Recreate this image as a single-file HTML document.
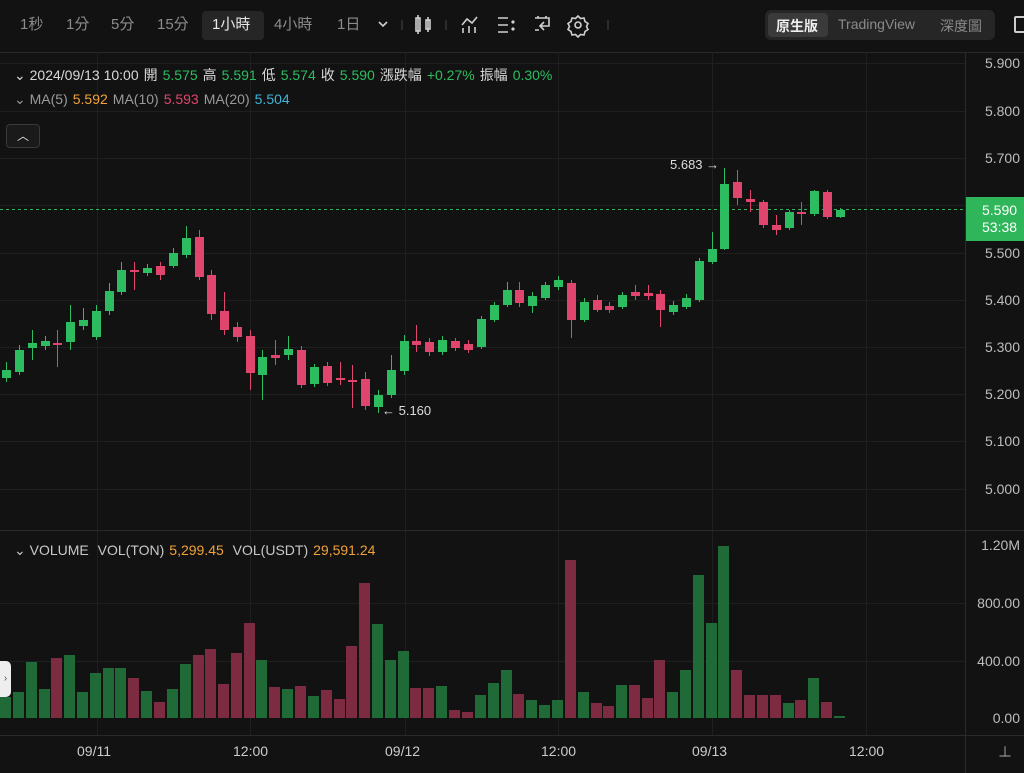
<!DOCTYPE html>
<html><head><meta charset="utf-8">
<style>
*{margin:0;padding:0;box-sizing:border-box}
body{width:1024px;height:773px;background:#121212;overflow:hidden;font-family:"Liberation Sans","Noto Sans CJK TC",sans-serif;color:#8a8a8a;position:relative}
.abs{position:absolute;white-space:nowrap}
.tb{top:13px;font-size:15px;color:#8c8c8c}
.g{color:#2dbd60}.o{color:#f0a23b}.p{color:#e0456e}.b{color:#3fb5d8}.w{color:#d8d8d8}
.ax{font-size:14px;color:#bdbdbd;right:4px}
.lg span{margin-right:5px}
</style></head><body>
<div class="abs tb" style="left:20px">1秒</div>
<div class="abs tb" style="left:66px">1分</div>
<div class="abs tb" style="left:111px">5分</div>
<div class="abs tb" style="left:157px">15分</div>
<div class="abs" style="left:202px;top:11px;width:62px;height:29px;background:#262626;border-radius:4px"></div>
<div class="abs tb" style="left:212px;color:#e8e8e8">1小時</div>
<div class="abs tb" style="left:274px">4小時</div>
<div class="abs tb" style="left:337px">1日</div>
<svg class="abs" style="left:0;top:0" width="620" height="52" fill="none" stroke="#d0d0d0" stroke-width="1.6">
<path d="M379 22l4 4 4-4" />
<line x1="402" y1="20" x2="402" y2="30" stroke="#333"/>
<rect x="416" y="18" width="4" height="13"/><line x1="418" y1="15" x2="418" y2="34"/><rect x="426" y="20" width="4" height="9"/><line x1="428" y1="17" x2="428" y2="32"/>
<line x1="446" y1="20" x2="446" y2="30" stroke="#333"/>
<path d="M462 25l5-6 5 4 5-6"/><line x1="463" y1="28" x2="463" y2="33"/><line x1="469" y1="26" x2="469" y2="33"/><line x1="475" y1="27" x2="475" y2="33"/>
<path d="M498 18h10M498 25h10M498 32h10"/><circle cx="513" cy="22" r=".8"/><circle cx="513" cy="29" r=".8"/>
<path d="M535 18h14v8h-8M544 22l-4 4 4 4M538 18v-2M546 18v-2M535 30h4"/>
<circle cx="578" cy="25" r="3"/><path d="M578 16l2.5 2.5 3.5-.5 1 3.5 3 2-1.5 3 1.5 3-3 2-1 3.5-3.5-.5-2.5 2.5-2.5-2.5-3.5.5-1-3.5-3-2 1.5-3-1.5-3 3-2 1-3.5 3.5.5z"/>
<line x1="608" y1="20" x2="608" y2="30" stroke="#333"/>
</svg>
<div class="abs" style="left:765px;top:10px;width:230px;height:30px;background:#262626;border-radius:6px"></div>
<div class="abs" style="left:768px;top:13px;width:60px;height:24px;background:#3a3a3a;border-radius:4px"></div>
<div class="abs" style="left:776px;top:16px;font-size:14px;color:#eee;font-weight:bold">原生版</div>
<div class="abs" style="left:838px;top:16px;font-size:14px;color:#8a8a8a">TradingView</div>
<div class="abs" style="left:940px;top:16px;font-size:14px;color:#8a8a8a">深度圖</div>
<div class="abs" style="left:1014px;top:16px;width:12px;height:17px;border:2px solid #ccc;border-radius:2px"></div>

<svg class="abs" style="left:0;top:0" width="1024" height="773" id="s"></svg>

<div class="abs lg" style="left:14px;top:65px;font-size:14px" ><span class="w">⌄ 2024/09/13 10:00</span><span class="w">開</span><span class="g">5.575</span><span class="w">高</span><span class="g">5.591</span><span class="w">低</span><span class="g">5.574</span><span class="w">收</span><span class="g">5.590</span><span class="w">漲跌幅</span><span class="g">+0.27%</span><span class="w">振幅</span><span class="g">0.30%</span></div>
<div class="abs lg" style="left:14px;top:91px;font-size:14px;color:#9a9a9a"><span>⌄ MA(5)</span><span class="o">5.592</span><span>MA(10)</span><span class="p">5.593</span><span>MA(20)</span><span class="b">5.504</span></div>
<div class="abs" style="left:6px;top:124px;width:34px;height:24px;border:1px solid #3a3a3a;border-radius:4px;background:#1a1a1a;color:#ddd;font-size:12px;text-align:center;line-height:22px">︿</div>
<div class="abs lg" style="left:14px;top:542px;font-size:14px;color:#c8c8c8"><span>⌄ VOLUME</span><span>&nbsp;VOL(TON)</span><span class="o">5,299.45</span><span>&nbsp;VOL(USDT)</span><span class="o">29,591.24</span></div>
<div class="abs" style="left:670px;top:157px;font-size:13px;color:#ddd">5.683 →</div>
<div class="abs" style="left:382px;top:403px;font-size:13px;color:#ddd">← 5.160</div>
<div class="abs ax" style="top:55px">5.900</div>
<div class="abs ax" style="top:103px">5.800</div>
<div class="abs ax" style="top:150px">5.700</div>
<div class="abs ax" style="top:245px">5.500</div>
<div class="abs ax" style="top:292px">5.400</div>
<div class="abs ax" style="top:339px">5.300</div>
<div class="abs ax" style="top:386px">5.200</div>
<div class="abs ax" style="top:433px">5.100</div>
<div class="abs ax" style="top:481px">5.000</div>
<div class="abs ax" style="top:537px">1.20M</div>
<div class="abs ax" style="top:595px">800.00</div>
<div class="abs ax" style="top:653px">400.00</div>
<div class="abs ax" style="top:710px">0.00</div>
<div class="abs" style="left:966px;top:197px;width:58px;height:44px;background:#2fb55a;color:#fff;font-size:14px;padding:5px 0 0 16px;line-height:17px">5.590<br>53:38</div>
<div class="abs" style="top:743px;left:77px;font-size:14px;color:#ccc">09/11</div>
<div class="abs" style="top:743px;left:233px;font-size:14px;color:#ccc">12:00</div>
<div class="abs" style="top:743px;left:385px;font-size:14px;color:#ccc">09/12</div>
<div class="abs" style="top:743px;left:541px;font-size:14px;color:#ccc">12:00</div>
<div class="abs" style="top:743px;left:692px;font-size:14px;color:#ccc">09/13</div>
<div class="abs" style="top:743px;left:849px;font-size:14px;color:#ccc">12:00</div>
<div class="abs" style="left:0;top:661px;width:11px;height:36px;background:#eee;border-radius:0 5px 5px 0;color:#555;font-size:10px;line-height:36px;text-align:center">›</div>
<div class="abs" style="left:998px;top:742px;width:16px;height:18px;color:#aaa;font-size:14px">⊥</div>
<script>
var C=[[6,370,378,362,382,1],[19,350,372,345,375,1],[32,343,348,330,360,1],[45,341,346,336,350,1],[57,343,345,330,367,0],[70,322,342,305,350,1],[83,320,326,308,330,1],[96,311,337,305,340,1],[109,291,311,283,315,1],[121,270,292,262,295,1],[134,270,272,262,290,0],[147,268,273,264,276,1],[160,266,275,262,280,0],[173,253,266,248,268,1],[186,238,255,226,258,1],[199,237,277,230,280,0],[211,275,314,270,320,0],[224,311,330,292,335,0],[237,327,337,322,342,0],[250,336,373,330,390,0],[262,357,375,350,400,1],[275,355,358,340,365,0],[288,349,355,336,360,1],[301,350,385,346,388,0],[314,367,384,364,387,1],[327,366,383,362,386,0],[340,378,380,362,385,0],[352,380,382,365,408,0],[365,379,406,372,410,0],[378,395,407,390,413,1],[391,370,395,355,398,1],[404,341,371,335,375,1],[416,341,345,325,352,0],[429,342,352,338,356,0],[442,340,352,336,355,1],[455,341,348,338,351,0],[468,344,350,340,353,0],[481,319,347,316,349,1],[494,305,320,302,322,1],[507,290,305,282,307,1],[519,290,303,282,307,0],[532,296,306,292,313,1],[545,285,298,282,300,1],[558,280,287,276,290,1],[571,283,320,280,338,0],[584,302,320,298,322,1],[597,300,310,295,312,0],[609,306,310,302,313,0],[622,295,307,292,309,1],[635,292,296,285,300,0],[648,293,296,285,300,0],[660,294,310,290,327,0],[673,305,312,301,315,1],[686,298,307,294,309,1],[699,261,300,258,302,1],[712,249,262,232,264,1],[724,184,249,168,250,1],[737,182,198,170,205,0],[750,199,202,190,212,0],[763,202,225,200,228,0],[776,225,230,215,235,0],[789,212,228,210,230,1],[801,212,214,202,225,0],[814,191,214,190,216,1],[827,192,217,190,219,0],[840,210,217,208,218,1]];
var V=[697,692,662,689,658,655,692,673,668,668,678,691,702,689,664,655,649,684,653,623,660,687,689,686,696,690,699,646,583,624,660,651,688,688,686,710,712,695,683,670,694,700,705,700,560,692,703,706,685,685,698,660,692,670,575,623,546,670,695,695,695,703,700,678,702,716];
var h='';
function L(x1,y1,x2,y2,c){h+='<line x1="'+x1+'" y1="'+y1+'" x2="'+x2+'" y2="'+y2+'" stroke="'+c+'" stroke-width="1"/>';}
L(0,52.5,1024,52.5,'#2a2a2a');
[63,111,158,205,253,300,347,394,441,489,603,661].forEach(function(y){L(0,y+.5,965,y+.5,'#1f1f1f')});
[97,250,405,558,712,866].forEach(function(x){L(x+.5,52,x+.5,735,'#1f1f1f')});
L(0,530.5,1024,530.5,'#2a2a2a');L(965.5,52,965.5,773,'#2a2a2a');L(0,735.5,1024,735.5,'#2a2a2a');
h+='<line x1="0" y1="209.5" x2="965" y2="209.5" stroke="#2fb55a" stroke-dasharray="3,3"/>';
C.forEach(function(c,i){var col=c[5]?'#2dbd60':'#e0456e';var vc=c[5]?'#1f6a37':'#7c2b40';
h+='<rect x="'+(c[0]-6)+'" y="'+V[i]+'" width="11" height="'+(718-V[i])+'" fill="'+vc+'"/>';
h+='<line x1="'+(c[0]+.5)+'" y1="'+c[3]+'" x2="'+(c[0]+.5)+'" y2="'+c[4]+'" stroke="'+col+'"/>';
h+='<rect x="'+(c[0]-4)+'" y="'+c[1]+'" width="9" height="'+Math.max(2,c[2]-c[1])+'" fill="'+col+'"/>';});
document.getElementById('s').innerHTML=h;
</script>
</body></html>
